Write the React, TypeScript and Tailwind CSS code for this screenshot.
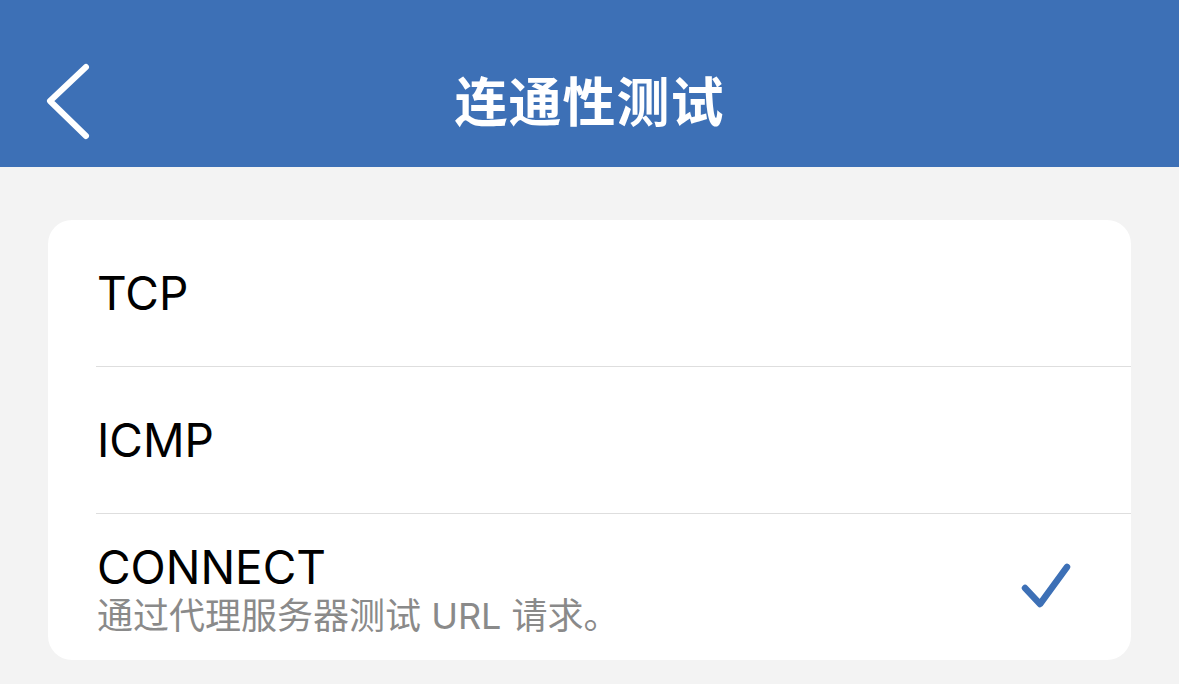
export default function App() {
  const font = {
    fontFamily: '"Inter", "Noto Sans CJK SC", sans-serif',
  };
  return (
    <div className="min-h-[684px] w-full bg-[#f3f3f3]" style={font}>
      <header className="relative flex h-[167px] items-center justify-center bg-[#3d70b6]">
        <button type="button" className="absolute left-[44px] top-[62px]">
          <svg width="50" height="80" viewBox="0 0 50 80" fill="none">
            <path
              d="M42 5 L6 39 L42 74"
              stroke="#ffffff"
              strokeWidth="6"
              strokeLinecap="round"
              strokeLinejoin="round"
            />
          </svg>
        </button>
        <h1 className="pt-[40px] text-[53px] font-bold leading-none tracking-[1px] text-white">
          连通性测试
        </h1>
      </header>

      <div className="px-[48px] pt-[53px]">
        <div className="overflow-hidden rounded-[24px] bg-white">
          <div className="flex h-[146px] items-center pl-[49px] pr-[48px]">
            <span className="text-[46px] leading-none text-black">TCP</span>
          </div>
          <div className="ml-[48px] h-px bg-[#dedede]" />
          <div className="flex h-[146px] items-center pl-[49px] pr-[48px]">
            <span className="text-[46px] leading-none text-black">ICMP</span>
          </div>
          <div className="ml-[48px] h-px bg-[#dedede]" />
          <div className="flex h-[146px] items-center justify-between pl-[49px] pr-[58px]">
            <div className="flex flex-col pt-[6px]">
              <span className="text-[46px] leading-[52px] text-black">CONNECT</span>
              <span className="text-[36px] leading-[46px] text-[#8a8a8a]">
                通过代理服务器测试 URL 请求。
              </span>
            </div>
            <svg width="52" height="48" viewBox="0 0 52 48" fill="none">
              <path
                d="M4 25 L19 41 L46 4"
                stroke="#3d70b6"
                strokeWidth="6.5"
                strokeLinecap="round"
                strokeLinejoin="round"
              />
            </svg>
          </div>
        </div>
      </div>
    </div>
  );
}
